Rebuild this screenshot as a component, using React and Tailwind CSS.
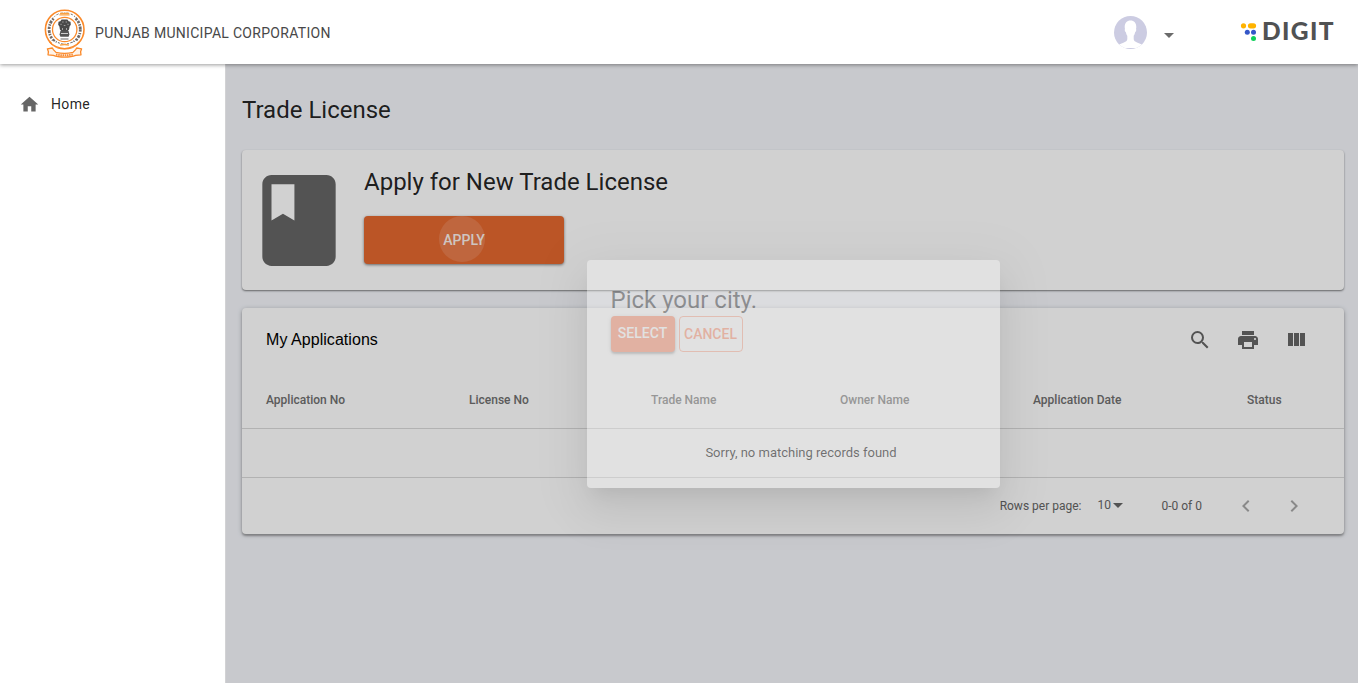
import { MdArrowDropDown, MdBook, MdChevronLeft, MdChevronRight, MdHome, MdPrint, MdSearch } from "react-icons/md";

function StateEmblem() {
  return (
    <svg className="h-[49px] w-[41px] shrink-0" viewBox="0 0 41 49">
      <circle cx="20.7" cy="20.5" r="19.3" fill="#fff" stroke="#fb8a2a" strokeWidth="1.6" />
      <circle cx="20.7" cy="20.5" r="15.6" fill="none" stroke="#4d443e" strokeWidth="2.8" strokeDasharray="2.2 1.3 1.2 1 2.8 1.2" pathLength="96" strokeOpacity="0.8" />
      <path d="M9 9Q20.5 -1.5 32 9L29 12Q20.5 5 12 12Z" fill="#fff" />
      <path d="M16 4.4h9M15.4 5.8h10.2" stroke="#f9a040" strokeWidth="1.3" />
      <path d="M8 31.5Q20.5 39 33 31.5v4.5l-6 3h-13l-6-3z" fill="#fff" />
      <circle cx="20.7" cy="20.5" r="12.2" fill="#fff" stroke="#fb8a2a" strokeWidth="1.3" />
      <path d="M17.6 10.4h5.8l1.3 1.8 1.8.6.3 3-1.2 1.6-.5 3.2-1.3 1.4h-6.6l-1.3-1.4-.5-3.2-1.2-1.6.3-3 1.8-.6z" fill="#4a4a4a" />
      <path d="M18.2 13h1.4M21.6 13H23M16.4 15.3h1.3M23.4 15.3h1.3M19.8 16.5h1.6M18.5 19v2M22.5 19v2" stroke="#bbb" strokeWidth="0.8" />
      <path d="M16.4 22h8.2l.8 3.5-.8 2.3h-8.2l-.8-2.3z" fill="#555" />
      <path d="M17 24.5h7" stroke="#ddd" strokeWidth="0.9" />
      <path d="M16.5 30h8" stroke="#777" strokeWidth="1.1" />
      <path d="M5.5 33Q11 39 20.5 39.6Q30 39 35.5 33" fill="none" stroke="#fb8a2a" strokeWidth="1.2" />
      <path d="M16 36.2q4.5-1.4 9 0" fill="none" stroke="#f9a040" strokeWidth="1.4" />
      <path d="M3.4 39.8l5-.8 1 1.6 2.6 2.8q8.500 2 17 0l2.600-2.800 1-1.600 5 .8-1 3 .4 3-5.400.6q-2 1-4.600 1.200-6.500 1-13 0-2.600-.2-4.600-1.200l-5.400-.6.4-3z" fill="#fff3e8" stroke="#fb8a2a" strokeWidth="1.3" strokeLinejoin="round" />
      <path d="M12 45.5q8.500 1.600 17 0" fill="none" stroke="#f58a35" strokeWidth="1.9" strokeDasharray="1.5 0.7" />
    </svg>
  );
}

function Avatar() {
  return (
    <svg className="h-[33px] w-[33px] shrink-0" viewBox="0 0 33 33">
      <defs>
        <clipPath id="avatarRound">
          <circle cx="16.5" cy="16.5" r="16.5" />
        </clipPath>
      </defs>
      <g clipPath="url(#avatarRound)">
        <rect width="33" height="33" fill="#cccce2" />
        <path d="M16.5 4.6c-3.7 0-5.8 2.5-5.8 6.4 0 .8.1 1.4.3 2-.8.7.1 3 1 3.4.3 1.7.7 2.6 1.3 3.4v3.3c0 2-1.4 2.9-4.4 3.8-2 .6-3.4 1.1-4.4 2.1V32h24v-3c-1-1-2.4-1.5-4.4-2.1-3-.9-4.4-1.8-4.4-3.8v-3.3c.6-.8 1-1.7 1.300-3.400.9-.4 1.800-2.700 1-3.400.2-.6.3-1.200.3-2 0-3.900-2.100-6.400-5.800-6.400z" fill="#fff" />
      </g>
    </svg>
  );
}

function DigitLogo() {
  return (
    <div className="flex h-8 w-[96px] shrink-0 items-center">
      <svg className="h-[22px] w-[18px] shrink-0" viewBox="0 0 18 22">
        <circle cx="3.5" cy="4.8" r="2.6" fill="#ffb300" />
        <rect x="7.9" y="2.2" width="8.2" height="5.2" rx="2.6" fill="#ffb300" />
        <circle cx="7.3" cy="11.2" r="2.5" fill="#3457c8" />
        <circle cx="13.5" cy="11.2" r="2.5" fill="#3457c8" />
        <circle cx="13.5" cy="17.4" r="2.5" fill="#0fd05a" />
      </svg>
      <span className="ml-1 pb-0.5 font-['Lato',sans-serif] text-[24.5px] leading-[30px] font-black tracking-[1.4px] text-[#505253]">DIGIT</span>
    </div>
  );
}

const columns = ["Application No", "License No", "Trade Name", "Owner Name", "Application Date", "Status"];

function Header() {
  return (
    <header className="relative z-20 flex h-16 shrink-0 items-center bg-white pr-[22px] pl-[44px] shadow-[0_1px_4px_rgba(0,0,0,0.4)]">
      <div className="pt-[3px]"><StateEmblem /></div>
      <div className="ml-[10px] pt-[3px] text-[14px] tracking-[0.3px] text-[#484848]">PUNJAB MUNICIPAL CORPORATION</div>
      <div className="ml-auto flex items-center">
        <Avatar />
        <MdArrowDropDown className="mt-[6px] ml-[10px] h-6 w-6 text-[#6b6b6b]" />
        <div className="ml-[59px]"><DigitLogo /></div>
      </div>
    </header>
  );
}

function ApplyCard() {
  return (
    <section className="flex h-[140px] rounded bg-white pt-4 pl-[2px] shadow-[0_1px_2px_rgba(0,0,0,0.5)]">
      <MdBook className="h-[109px] w-[110px] shrink-0 text-[#666]" preserveAspectRatio="none" />
      <div className="ml-[10px]">
        <h2 className="text-[24px] leading-8 text-black/87">Apply for New Trade License</h2>
        <button className="relative mt-[18px] flex h-12 w-[200px] items-center justify-center rounded bg-[#e5682f] text-[14px] font-medium text-white shadow-[0_1px_3px_rgba(0,0,0,0.5)]">
          <span className="absolute top-0 left-[75px] h-[46px] w-[46px] rounded-full bg-white/14" />
          <span className="opacity-90">APPLY</span>
        </button>
      </div>
    </section>
  );
}

function ApplicationsCard() {
  return (
    <section className="mt-[18px] rounded bg-white text-[12px] text-[#666] shadow-[0_1px_5px_rgba(0,0,0,0.25),0_2px_2px_rgba(0,0,0,0.25)]">
      <div className="flex h-16 items-center pr-9 pl-6">
        <h3 className="font-['Liberation_Sans',sans-serif] text-[16px] tracking-[0.05px] text-black">My Applications</h3>
        <div className="ml-auto flex gap-6">
          <MdSearch className="h-6 w-6" />
          <MdPrint className="h-6 w-6" />
          <svg className="h-6 w-6" viewBox="0 0 24 24" fill="currentColor"><path d="M10 18h5V5h-5v13zm-6 0h5V5H4v13zM16 5v13h5V5h-5z" /></svg>
        </div>
      </div>
      <div className="grid h-[57px] grid-cols-[203px_182px_189px_193px_214px_1fr] items-center border-b border-[#d9d9d9] pl-6 font-medium text-[#6f6f6f]">
        {columns.map((name) => <div key={name}>{name}</div>)}
      </div>
      <div className="flex h-[49px] items-center justify-center border-b border-[#d9d9d9] pl-4 text-[13px] text-black/87">
        Sorry, no matching records found
      </div>
      <div className="flex h-14 items-center justify-end pr-[38px]">
        <span>Rows per page:</span>
        <span className="ml-4 flex items-center pb-0.5">10<MdArrowDropDown className="-ml-[4.5px] h-6 w-6" /></span>
        <span className="ml-[31px]">0-0 of 0</span>
        <MdChevronLeft className="ml-8 h-6 w-6 text-[#a8a8a8]" />
        <MdChevronRight className="ml-6 h-6 w-6 text-[#a8a8a8]" />
      </div>
    </section>
  );
}

function CityDialog() {
  return (
    <div className="absolute inset-0 z-10 flex items-center justify-center bg-black/18 pt-px pl-0.5">
      <div className="h-[228px] w-[413px] rounded bg-white px-6 pt-6 opacity-36 shadow-[0_11px_15px_-7px_rgba(0,0,0,0.2),0_24px_38px_3px_rgba(0,0,0,0.14),0_9px_46px_8px_rgba(0,0,0,0.12)]">
        <h2 className="text-[24px] leading-8 text-black/87">Pick your city.</h2>
        <div className="flex gap-1 text-[14px] font-medium">
          <button className="h-9 w-16 rounded bg-[#fe7a51] pb-0.5 text-white shadow-[0_1px_5px_rgba(0,0,0,0.2),0_2px_2px_rgba(0,0,0,0.3)]">SELECT</button>
          <button className="h-9 w-16 rounded border border-[#fe7a51]/75 text-[#fe7a51]">CANCEL</button>
        </div>
      </div>
    </div>
  );
}

export default function App() {
  return (
    <div className="flex h-screen flex-col overflow-hidden font-['Roboto',sans-serif]">
      <Header />
      <div className="flex min-h-0 flex-1">
        <nav className="w-[225px] shrink-0 bg-white pt-[30px] pl-5">
          <a className="flex items-center text-[14px] tracking-[0.35px] text-black/87">
            <MdHome className="-ml-px mr-[11px] h-[21px] w-[21px] text-[#666]" />
            Home
          </a>
        </nav>
        <main className="relative min-w-0 flex-1 border-l border-[#d2d2d4] bg-[#f4f6fb] pr-[14px] pl-4">
          <h1 className="pt-[30px] pb-6 text-[24px] leading-8 text-black/87">Trade License</h1>
          <ApplyCard />
          <ApplicationsCard />
          <CityDialog />
        </main>
      </div>
    </div>
  );
}
